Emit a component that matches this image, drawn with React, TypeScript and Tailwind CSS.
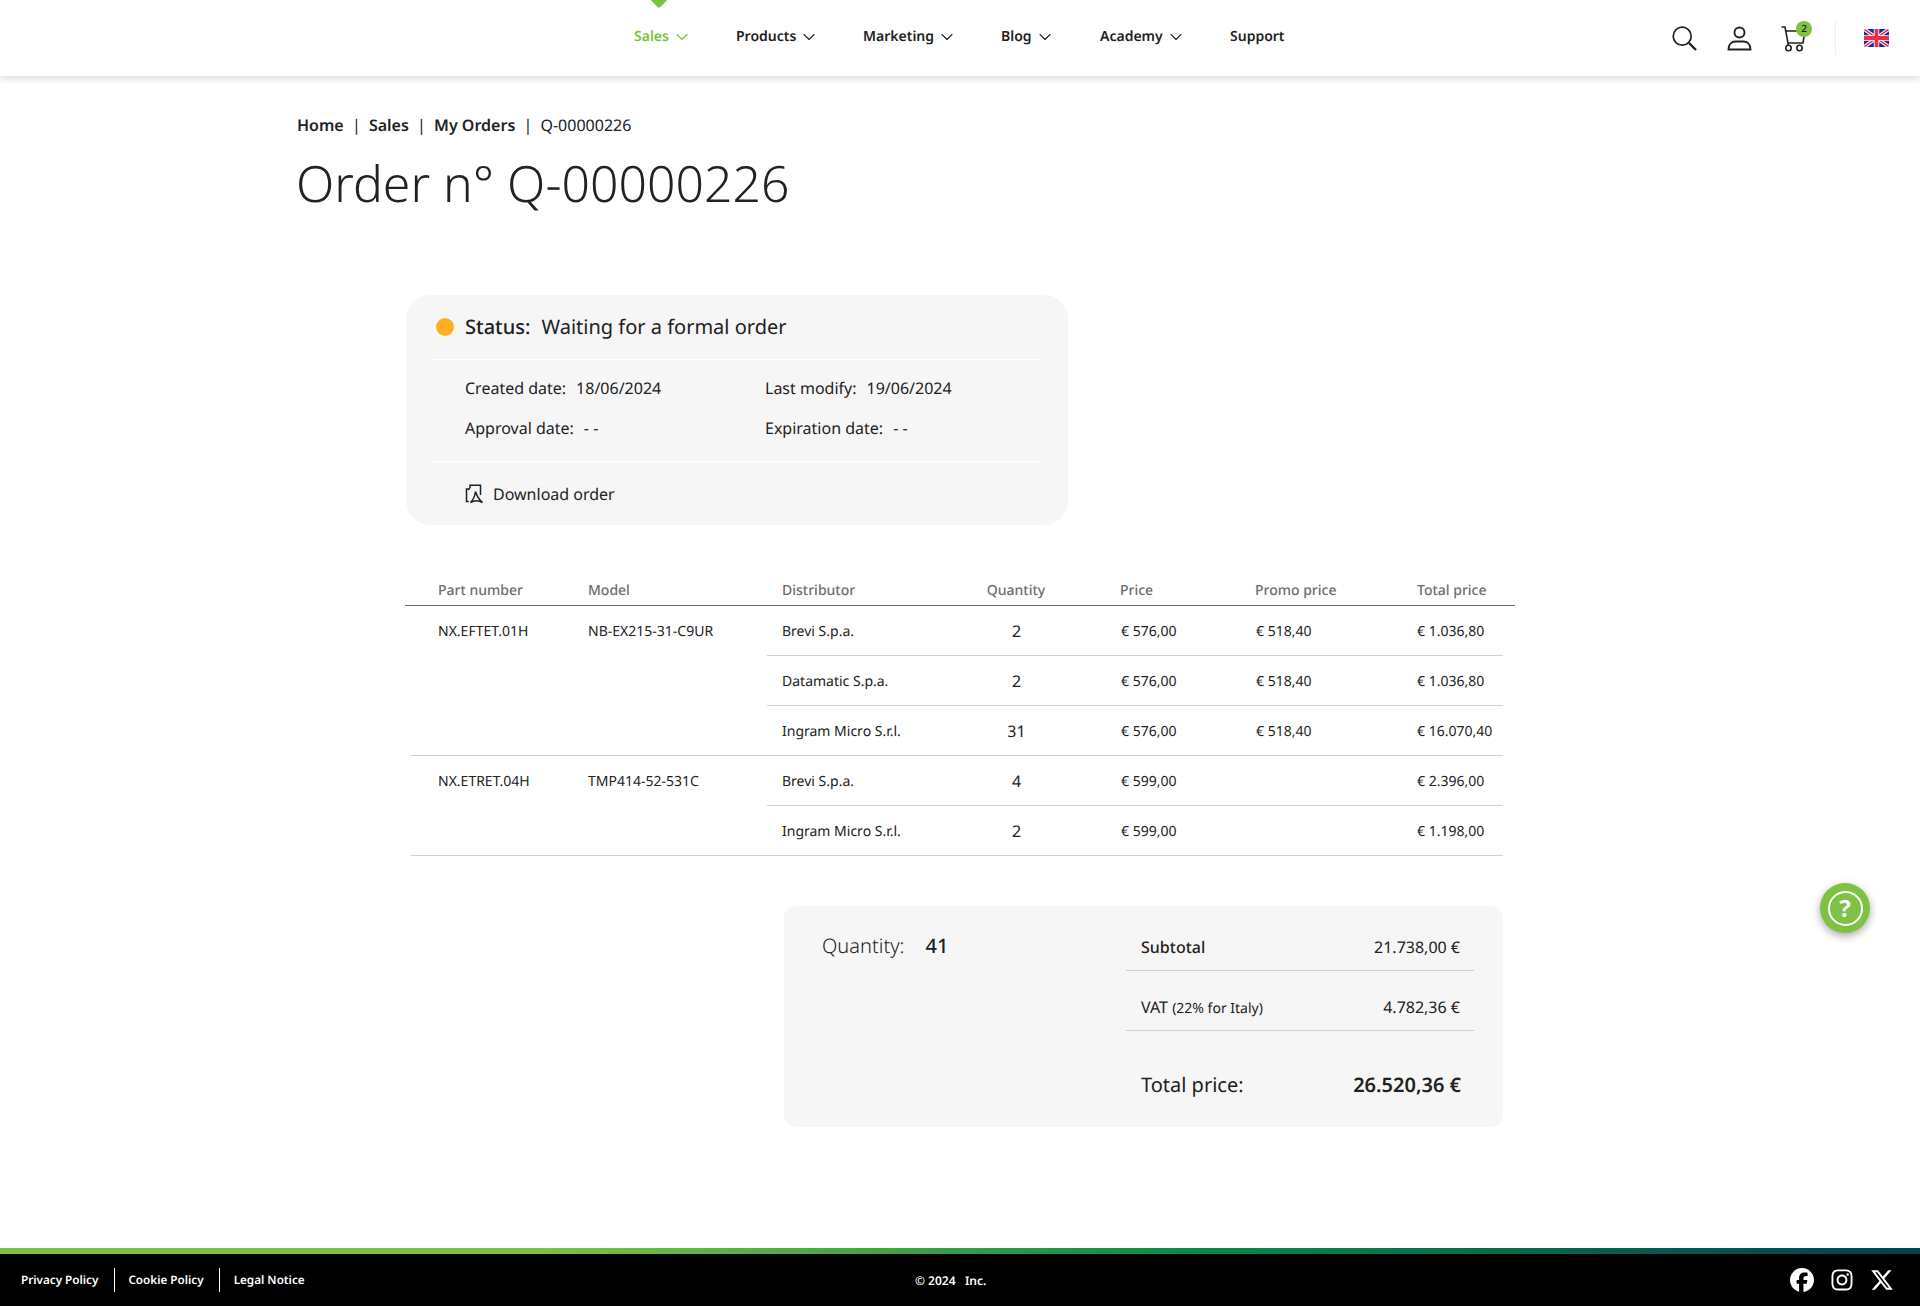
import { ChevronDown } from "lucide-react";
import { FaFacebook, FaInstagram, FaXTwitter } from "react-icons/fa6";

const NAV = [
  { label: "Sales", width: "w-[102px]", active: true, caret: true },
  { label: "Products", width: "w-[127px]", caret: true },
  { label: "Marketing", width: "w-[138px]", caret: true },
  { label: "Blog", width: "w-[99px]", caret: true },
  { label: "Academy", width: "w-[130px]", caret: true },
  { label: "Support", width: "w-[60px]" },
];

const GROUPS = [
  {
    part: "NX.EFTET.01H",
    model: "NB-EX215-31-C9UR",
    rows: [
      ["Brevi S.p.a.", "2", "€ 576,00", "€ 518,40", "€ 1.036,80"],
      ["Datamatic S.p.a.", "2", "€ 576,00", "€ 518,40", "€ 1.036,80"],
      ["Ingram Micro S.r.l.", "31", "€ 576,00", "€ 518,40", "€ 16.070,40"],
    ],
  },
  {
    part: "NX.ETRET.04H",
    model: "TMP414-52-531C",
    rows: [
      ["Brevi S.p.a.", "4", "€ 599,00", "", "€ 2.396,00"],
      ["Ingram Micro S.r.l.", "2", "€ 599,00", "", "€ 1.198,00"],
    ],
  },
];

function UkFlag() {
  return (
    <svg width="25" height="18" viewBox="0 0 25 18" className="rounded-[2px]">
      <rect width="25" height="18" fill="#1a2a9a" />
      <path d="M0 0L25 18M25 0L0 18" stroke="#fff" strokeWidth="3.6" />
      <path d="M0 0L25 18M25 0L0 18" stroke="#e5304a" strokeWidth="1.6" />
      <path d="M12.5 0V18M0 9H25" stroke="#fff" strokeWidth="5.4" />
      <path d="M12.5 0V18M0 9H25" stroke="#e5304a" strokeWidth="3.8" />
    </svg>
  );
}

function Header() {
  return (
    <header className="relative flex h-[76px] shrink-0 items-center bg-white shadow-[0_2px_8px_rgba(0,0,0,0.16)]">
      <nav className="ml-[634px] flex items-center pb-[4px]">
        {NAV.map((item) => (
          <a
            key={item.label}
            className={`relative flex items-center gap-[3px] text-[14px] font-semibold ${item.width} ${
              item.active ? "text-[#7dc242]" : "text-[#222]"
            }`}
          >
            {item.label}
            {item.caret ? <ChevronDown size={20} strokeWidth={1.3} className="mt-[2px]" /> : null}
            {item.active ? (
              <span className="absolute left-[17px] top-[-36px] h-[16px] w-[16px] rotate-45 rounded-[2px] bg-[#7dc242]" />
            ) : null}
          </a>
        ))}
      </nav>
      <div className="ml-[382px] flex items-center">
        <svg width="25" height="25" viewBox="0 0 25 25" fill="none" stroke="#222" strokeWidth="1.7">
          <circle cx="10.2" cy="10.2" r="9" />
          <path d="M17 17L24 24" strokeWidth="2.4" />
        </svg>
        <svg width="25" height="25" viewBox="0 0 25 25" fill="none" stroke="#222" strokeWidth="1.9" className="ml-[30px]">
          <circle cx="12.5" cy="6.5" r="5" />
          <path d="M1.5 23.5c0-5 3-8 7-8h8c4 0 7 3 7 8z" />
        </svg>
        <div className="relative ml-[29px] h-[25px] w-[26px]">
          <svg width="26" height="26" viewBox="0 0 26 26" fill="none" stroke="#222" strokeWidth="1.6">
            <path d="M0.5 1H4L7 17V19" />
            <path d="M5 5H24L22 17H7" />
            <circle cx="7.5" cy="22" r="2.7" />
            <circle cx="18.5" cy="22" r="2.7" />
          </svg>
          <span className="absolute left-[15px] top-[-5px] flex h-[16px] w-[16px] items-center justify-center rounded-full bg-[#7dc242] text-[10px] font-medium text-[#222]">
            2
          </span>
        </div>
        <span className="ml-[28px] h-[34px] w-px bg-[#eeeeee]" />
        <span className="ml-[28px] flex">
          <UkFlag />
        </span>
      </div>
    </header>
  );
}

function DownloadIcon() {
  return (
    <svg width="19" height="20" viewBox="0 0 19 20" fill="none" stroke="#222" strokeWidth="1.5">
      <path d="M5 4V1.2H15.5V11" />
      <path d="M3.8 5H1.5V17.6H3.8" />
      <path d="M5 4L3 6" />
      <path d="M10.5 7.5C10 11 8 16 5.5 18.5C9 16.5 13 16 17.5 18.5C14 15.5 11.5 11 10.5 7.5Z" />
    </svg>
  );
}

function StatusCard() {
  return (
    <section className="ml-[109px] mt-[77px] h-[230px] w-[662px] rounded-[24px] bg-[#f6f6f6] px-[26px]">
      <div className="flex h-[65px] items-center border-b border-white pl-[4px]">
        <span className="h-[18px] w-[18px] rounded-full bg-[#ffb020]" />
        <span className="ml-[11px] text-[20px] font-medium text-[#222]">Status:</span>
        <span className="ml-[11px] text-[20px] text-[#222]">Waiting for a formal order</span>
      </div>
      <div className="grid h-[102px] grid-cols-[300px_1fr] content-start gap-y-[16px] border-b border-white pl-[33px] pt-[16px] text-[16px] leading-[24px] text-[#222]">
        <p>
          Created date:<span className="ml-[10px]">18/06/2024</span>
        </p>
        <p>
          Last modify:<span className="ml-[10px]">19/06/2024</span>
        </p>
        <p>
          Approval date:<span className="ml-[10px]">- -</span>
        </p>
        <p>
          Expiration date:<span className="ml-[10px]">- -</span>
        </p>
      </div>
      <a className="flex h-[63px] items-center pl-[33px] text-[16px] text-[#222]">
        <DownloadIcon />
        <span className="ml-[9px]">Download order</span>
      </a>
    </section>
  );
}

function OrderTable() {
  return (
    <section className="ml-[108px] mt-[48px] w-[1110px] text-[14px] text-[#222]">
      <div className="grid h-[33px] grid-cols-[150px_194px_154px_160px_135px_162px_1fr] items-center border-b border-[#666] pl-[33px] pt-[2px] font-medium text-[#6e6e6e]">
        <span>Part number</span>
        <span>Model</span>
        <span>Distributor</span>
        <span className="text-center">Quantity</span>
        <span className="pl-[24px]">Price</span>
        <span className="pl-[24px]">Promo price</span>
        <span className="pl-[24px]">Total price</span>
      </div>
      {GROUPS.map((group) => (
        <div
          key={group.part}
          className="ml-[6px] grid w-[1092px] grid-cols-[356px_1fr] border-b border-[#d0d0d0]"
        >
          <div className="flex h-[50px] items-center pl-[27px] pt-[1px]">
            <span className="w-[150px]">{group.part}</span>
            <span>{group.model}</span>
          </div>
          <div>
            {group.rows.map((row, i) => (
              <div
                key={row[0]}
                className={`grid grid-cols-[169px_160px_135px_162px_1fr] items-center pt-[2px] ${
                  i < group.rows.length - 1 ? "h-[50px] border-b border-[#d0d0d0]" : "h-[49px]"
                }`}
              >
                <span className="pl-[15px]">{row[0]}</span>
                <span className="-mt-[2px] pl-px text-center text-[16px]">{row[1]}</span>
                <span className="pl-[25px]">{row[2]}</span>
                <span className="pl-[25px]">{row[3]}</span>
                <span className="pl-[24px]">{row[4]}</span>
              </div>
            ))}
          </div>
        </div>
      ))}
    </section>
  );
}

function Summary() {
  return (
    <section className="ml-[487px] mt-[50px] flex h-[221px] w-[719px] rounded-[12px] bg-[#f6f6f6] text-[#222]">
      <div className="flex h-[40px] w-[342px] items-center pl-[38px] pt-[40px] text-[20px]">
        <span className="font-light">Quantity:</span>
        <span className="ml-[21px] font-medium">41</span>
      </div>
      <div className="w-[348px]">
        <div className="flex h-[65px] items-center justify-between border-b border-[#cfcfcf] pl-[15px] pr-[14px] pt-[17px] text-[16px]">
          <span className="font-medium">Subtotal</span>
          <span>21.738,00 €</span>
        </div>
        <div className="flex h-[60px] items-center justify-between border-b border-[#cfcfcf] pl-[15px] pr-[14px] pt-[12px] text-[16px]">
          <span>
            VAT <span className="text-[14px]">(22% for Italy)</span>
          </span>
          <span>4.782,36 €</span>
        </div>
        <div className="flex h-[88px] items-center justify-between pl-[15px] pr-[13px] pt-[20px] text-[20px]">
          <span>Total price:</span>
          <span className="font-semibold">26.520,36 €</span>
        </div>
      </div>
    </section>
  );
}

function Footer() {
  return (
    <footer className="mt-auto shrink-0">
      <div className="h-[6px] bg-[linear-gradient(90deg,#7dc242_0%,#7dc242_28%,#0a8a4a_62%,#004050_100%)]" />
      <div className="relative flex h-[52px] items-center bg-black pl-[21px] text-[12px] font-semibold text-white">
        <a className="mt-[1px] text-[11.7px]">Privacy Policy</a>
        <span className="ml-[16px] mr-[13px] h-[24px] w-px bg-white" />
        <a className="mt-[1px] text-[11.7px]">Cookie Policy</a>
        <span className="ml-[15px] mr-[14px] h-[24px] w-px bg-white" />
        <a className="mt-[1px] text-[11.7px]">Legal Notice</a>
        <span className="absolute left-[915px] top-[18px] whitespace-pre">© 2024   Inc.</span>
        <div className="ml-auto mr-[26px] flex items-center gap-[16px] text-[24px]">
          <FaFacebook />
          <FaInstagram />
          <FaXTwitter />
        </div>
      </div>
    </footer>
  );
}

export default function App() {
  return (
    <div className="relative flex min-h-[1306px] flex-col bg-white font-['Noto_Sans',sans-serif] text-[#222] [text-rendering:geometricPrecision]">
      <Header />
      <main className="ml-[297px]">
        <nav className="mt-[36px] flex h-[26px] items-center text-[16px] text-[#222]">
          <a className="font-semibold">Home</a>
          <span className="mx-[8.2px]">|</span>
          <a className="font-semibold">Sales</a>
          <span className="mx-[8.2px]">|</span>
          <a className="font-semibold">My Orders</a>
          <span className="mx-[8.2px]">|</span>
          <span>Q-00000226</span>
        </nav>
        <h1 className="-ml-px mt-[10px] text-[49.9px] font-light leading-[70px] text-[#222]">Order n° Q-00000226</h1>
        <StatusCard />
        <OrderTable />
        <Summary />
      </main>
      <button className="absolute left-[1820px] top-[883px] flex h-[50px] w-[50px] items-center justify-center rounded-full bg-[#7dc242] shadow-[0_3px_8px_rgba(0,0,0,0.35)]">
        <span className="flex h-[35px] w-[35px] items-center justify-center rounded-full border-[2px] border-white text-[24px] font-bold leading-none text-white">
          ?
        </span>
      </button>
      <Footer />
    </div>
  );
}
